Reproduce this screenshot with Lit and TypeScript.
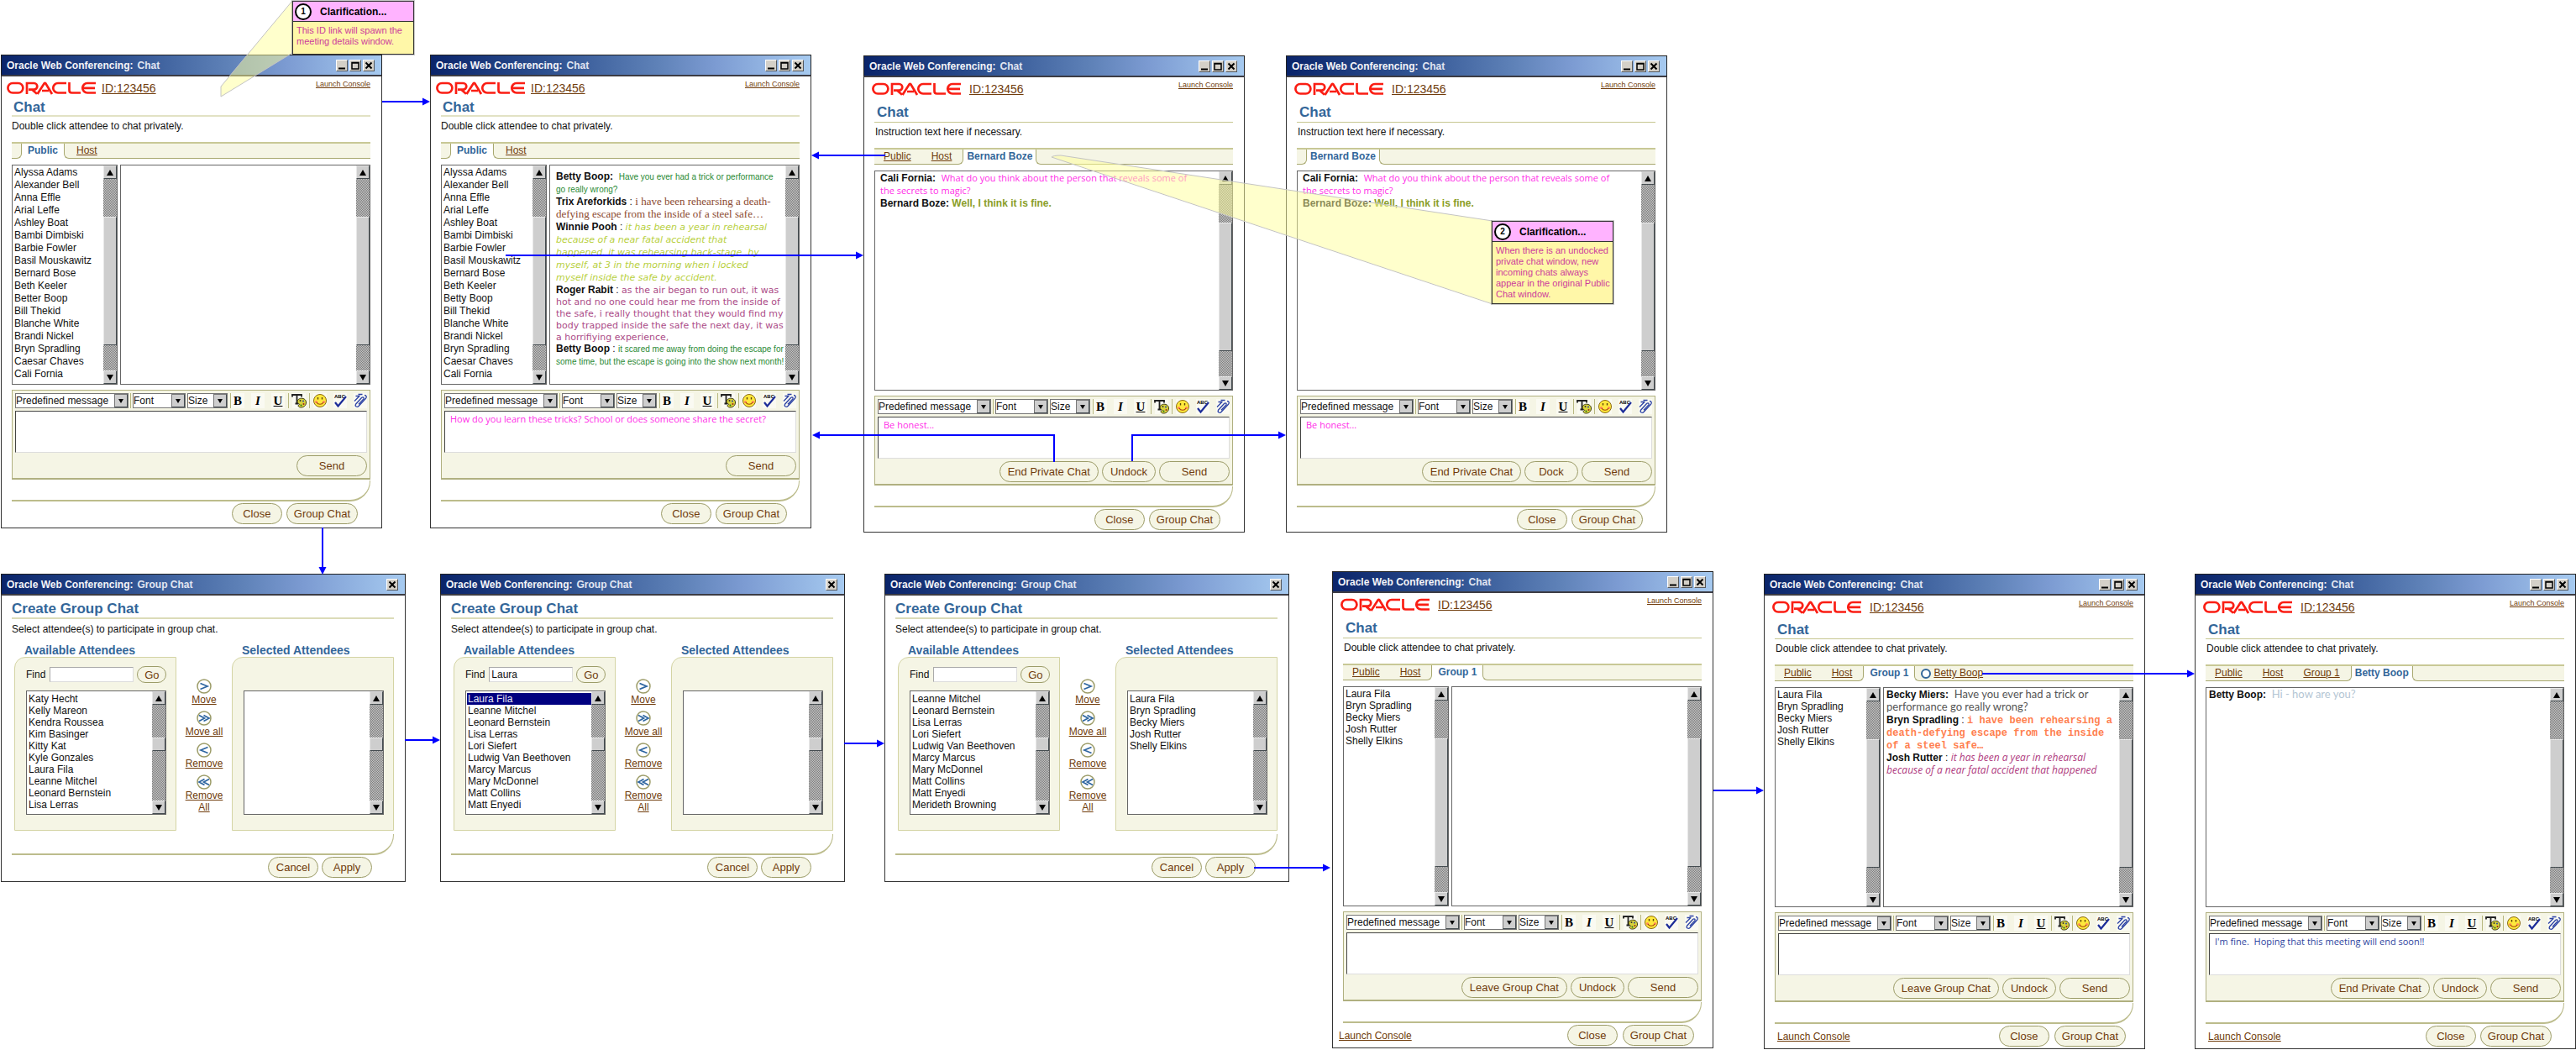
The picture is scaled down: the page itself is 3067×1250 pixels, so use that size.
import { LitElement, html, css, svg, nothing } from "lit";
import { customElement, property } from "lit/decorators.js";
import { classMap } from "lit/directives/class-map.js";
import { styleMap } from "lit/directives/style-map.js";

interface Message {
  who: string;
  sep: string;
  text: string;
  face: string;
}

interface ChatData {
  x: number;
  y: number;
  head: "short" | "mid" | "tall";
  hint: string;
  before: string[];
  active: string;
  after: string[];
  alert?: boolean;
  attendees?: string[];
  inset: "roomy" | "loose" | "tight";
  messages: Message[];
  draft: string;
  draftFace: string;
  actions: string[];
  console?: "edge" | "inner" | "plain";
}

interface GroupData {
  x: number;
  y: number;
  find: string;
  available: string[];
  selected: string[];
  marked?: string;
}

const everyone = (eleventh: string) => [
  "Alyssa Adams", "Alexander Bell", "Anna Effle", "Arial Leffe", "Ashley Boat",
  "Bambi Dimbiski", "Barbie Fowler", "Basil Mouskawitz", "Bernard Bose", "Beth Keeler",
  eleventh, "Bill Thekid", "Blanche White", "Brandi Nickel", "Bryn Spradling",
  "Caesar Chaves", "Cali Fornia",
];
const groupOne = ["Laura Fila", "Bryn Spradling", "Becky Miers", "Josh Rutter", "Shelly Elkins"];
const privately = "Double click attendee to chat privately.";
const instruction = "Instruction text here if necessary.";
const magic: Message[] = [
  { who: "Cali Fornia:", sep: "  ", text: "What do you think about the person that reveals some of\nthe secrets to magic?", face: "trebuchet pink" },
  { who: "Bernard Boze:", sep: " ", text: "Well, I think it is fine.", face: "strong olive" },
];

const chats: ChatData[] = [
  {
    x: 1, y: 65, head: "short", hint: privately, before: [], active: "Public", after: ["Host"],
    attendees: everyone("Better Boop"), inset: "roomy", messages: [], draft: "", draftFace: "", actions: [],
  },
  {
    x: 512, y: 65, head: "short", hint: privately, before: [], active: "Public", after: ["Host"],
    attendees: everyone("Betty Boop"), inset: "roomy",
    messages: [
      { who: "Betty Boop:", sep: "  ", text: "Have you ever had a trick or performance\ngo really wrong?", face: "narrow green" },
      { who: "Trix Areforkids", sep: " : ", text: "i have been rehearsing a death-\ndefying escape from the inside of a steel safe…", face: "palatino brown" },
      { who: "Winnie Pooh", sep: " : ", text: "it has been a year in rehearsal\nbecause of a near fatal accident that\nhappened. it was rehearsing back-stage .by\nmyself, at 3 in the morning when i locked\nmyself inside the safe by accident.", face: "gothic lime" },
      { who: "Roger Rabit", sep: " : ", text: "as the air began to run out, it was\nhot and no one could hear me from the inside of\nthe safe, i really thought that they would find my\nbody trapped inside the safe the next day, it was\na horrifiying experience,", face: "verdana plum" },
      { who: "Betty Boop", sep: " : ", text: "it scared me away from doing the escape for\nsome time, but the escape is going into the show next month!", face: "narrow green" },
    ],
    draft: "How do you learn these tricks? School or does someone share the secret?", draftFace: "trebuchet pink", actions: [],
  },
  {
    x: 1028, y: 66, head: "tall", hint: instruction, before: ["Public", "Host"], active: "Bernard Boze", after: [],
    inset: "loose", messages: magic, draft: "Be honest...", draftFace: "trebuchet pink",
    actions: ["End Private Chat", "Undock"],
  },
  {
    x: 1531, y: 66, head: "tall", hint: instruction, before: [], active: "Bernard Boze", after: [],
    inset: "loose", messages: magic, draft: "Be honest...", draftFace: "trebuchet pink",
    actions: ["End Private Chat", "Dock"],
  },
  {
    x: 1586, y: 680, head: "tall", hint: privately, before: ["Public", "Host"], active: "Group 1", after: [],
    attendees: groupOne, inset: "tight", messages: [], draft: "", draftFace: "",
    actions: ["Leave Group Chat", "Undock"], console: "edge",
  },
  {
    x: 2100, y: 683, head: "mid", hint: privately, before: ["Public", "Host"], active: "Group 1", after: ["Betty Boop"],
    alert: true, attendees: groupOne, inset: "tight",
    messages: [
      { who: "Becky Miers:", sep: "  ", text: "Have you ever had a trick or\nperformance go really wrong?", face: "comic gray" },
      { who: "Bryn Spradling", sep: " : ", text: "i have been rehearsing a\ndeath-defying escape from the inside\nof a steel safe…", face: "courier orange" },
      { who: "Josh Rutter", sep: " : ", text: "it has been a year in rehearsal\nbecause of a near fatal accident that happened", face: "slanted magenta" },
    ],
    draft: "", draftFace: "", actions: ["Leave Group Chat", "Undock"], console: "inner",
  },
  {
    x: 2613, y: 683, head: "mid", hint: privately, before: ["Public", "Host", "Group 1"], active: "Betty Boop", after: [],
    inset: "tight", messages: [{ who: "Betty Boop:", sep: "  ", text: "Hi - how are you?", face: "comic pale" }],
    draft: "I'm fine.  Hoping that this meeting will end soon!!", draftFace: "trebuchet navy",
    actions: ["End Private Chat", "Undock"], console: "plain",
  },
];

const groups: GroupData[] = [
  {
    x: 1, y: 683, find: "", selected: [],
    available: ["Katy Hecht", "Kelly Mareon", "Kendra Roussea", "Kim Basinger", "Kitty Kat", "Kyle Gonzales", "Laura Fila", "Leanne Mitchel", "Leonard Bernstein", "Lisa Lerras"],
  },
  {
    x: 524, y: 683, find: "Laura", selected: [], marked: "Laura Fila",
    available: ["Laura Fila", "Leanne Mitchel", "Leonard Bernstein", "Lisa Lerras", "Lori Siefert", "Ludwig Van Beethoven", "Marcy Marcus", "Mary McDonnel", "Matt Collins", "Matt Enyedi"],
  },
  {
    x: 1053, y: 683, find: "", selected: groupOne,
    available: ["Leanne Mitchel", "Leonard Bernstein", "Lisa Lerras", "Lori Siefert", "Ludwig Van Beethoven", "Marcy Marcus", "Mary McDonnel", "Matt Collins", "Matt Enyedi", "Merideth Browning"],
  },
];

const base = css`
  * { box-sizing: border-box; }
  :host {
    display: block;
    font: 12px/16px "Liberation Sans", Arial, sans-serif;
    color: #111;
  }
  button, input, select, textarea { font: inherit; color: inherit; margin: 0; padding: 0; border-radius: 0; }
  a { color: #703c0c; text-decoration: underline; }
  p, h1, h2 { margin: 0; }
  .window { display: flex; flex-direction: column; background: #fff; border: 1px solid #333; border-top: 0; }
  .bar {
    display: flex; align-items: center; height: 26px; padding: 0 8px 0 6px; margin: 0 -1px; gap: 5px;
    border: 1px solid #222; border-bottom: 2px solid #3c3c44;
    background: linear-gradient(90deg, #0a246a, #2c4f8f 30%, #5f82b8 60%, #7c9bd2 75%, #a6caf0);
    color: #f4f4f8; font-weight: bold;
  }
  .bar .name { flex: 1; color: #e2e6f2; }
  .controls { display: flex; gap: 2px; }
  .controls button {
    width: 14px; height: 14px; display: block; background: #d4d0c8;
    border: 1px solid; border-color: #fff #55585c #55585c #fff;
  }
  .controls svg { display: block; width: 12px; height: 12px; }
  .body { display: flex; flex-direction: column; padding: 0 13px 0 12px; }
  h1 { font-size: 17px; line-height: 18px; color: #336699; }
  .hint { padding: 3px 0 11px; white-space: nowrap; }
  .pill {
    height: 25px; min-width: 60px; padding: 0 8px; border: 1px solid #9c9c68; border-radius: 13px;
    background: #f5f5e5; color: #703c0c; font-size: 13px; line-height: 22px; white-space: nowrap;
  }
  .curve {
    height: 25px; border: solid #bcbc8c; border-width: 0 1px 2px 0; border-bottom-right-radius: 24px;
  }
  .footer { display: flex; justify-content: flex-end; gap: 5px; margin-top: 2px; }
  .listbox { display: flex; min-width: 0; border: 1px solid #666; background: #fff; }
  .listbox select {
    appearance: none; flex: 1; min-width: 0; border: 0; outline: 0; background: #fff;
    overflow: hidden; scrollbar-width: none;
  }
  .trebuchet { font-family: "Open Sans", "Trebuchet MS", sans-serif; font-size: 11px; }
  .pink { color: #ff2ee8; }
  .navy { color: #2f45a0; }
`;

const shut = svg`<path d="M2.5 2.5l7 7M9.5 2.5l-7 7" stroke="#000" stroke-width="2" />`;

const controls = (full: boolean) => html`
  <div class="controls">
    ${full
      ? html`
          <button type="button" aria-label="Minimize"><svg viewBox="0 0 12 12"><path d="M2 9.500h8" stroke="#000" stroke-width="2" /></svg></button>
          <button type="button" aria-label="Maximize"><svg viewBox="0 0 12 12"><path d="M2 2.500h8v7.500h-8z M2 3h8" fill="none" stroke="#000" stroke-width="1.500" /></svg></button>`
      : nothing}
    <button type="button" aria-label="Close window"><svg viewBox="0 0 12 12">${shut}</svg></button>
  </div>
`;

@customElement("scroll-rail")
export class ScrollRail extends LitElement {
  @property({ type: Boolean }) small = false;

  static styles = css`
    * { box-sizing: border-box; }
    :host { display: flex; flex-direction: column; width: 16px; flex: none; }
    button {
      height: 16px; flex: none; margin: 0; padding: 0; display: grid; place-items: center;
      background: #cecece; border: 1px solid; border-color: #e8e8e8 #444c50 #444c50 #e8e8e8;
    }
    svg { width: 8px; height: 7px; display: block; }
    .track {
      flex: 1; display: flex; flex-direction: column;
      background: repeating-conic-gradient(#7c7c7c 0 25%, #c8c8c8 0 50%) 0 0 / 2px 2px;
    }
    .thumb { background: #cecece; border: 1px solid; border-color: #e8e8e8 #444c50 #444c50 #e8e8e8; }
    .lead { flex: 45; }
    .thumb { flex: 153; }
    .tail { flex: 30; }
    .small .lead { flex: 40; }
    .small .thumb { flex: 14; }
    .small .tail { flex: 60; }
  `;

  render() {
    return html`
      <button type="button" aria-label="Scroll up"><svg viewBox="0 0 8 7"><path d="M4 0l4 7H0z" /></svg></button>
      <div class=${classMap({ track: true, small: this.small })}>
        <div class="lead"></div>
        <div class="thumb"></div>
        <div class="tail"></div>
      </div>
      <button type="button" aria-label="Scroll down"><svg viewBox="0 0 8 7"><path d="M4 7l4-7H0z" /></svg></button>
    `;
  }
}

@customElement("message-composer")
export class MessageComposer extends LitElement {
  @property() draft = "";
  @property() face = "";
  @property({ attribute: false }) actions: string[] = [];

  static styles = [
    base,
    css`
      .composer {
        display: flex; flex-direction: column; gap: 3px; padding: 3px 3px 2px 3px;
        border: 1px solid #b0b080; border-bottom-width: 2px; background: #f5f5e5;
      }
      .tools { display: flex; align-items: center; gap: 2px; height: 18px; }
      .drop { display: flex; height: 18px; border: 1px solid #777; background: #fff; }
      .drop select { appearance: none; flex: 1; min-width: 0; border: 0; background: #fff; line-height: 15px; }
      .drop .arrow { width: 16px; display: grid; place-items: center; background: #cecece; border: 1px solid; border-color: #777 #444c50 #444c50 #777; }
      .drop svg { width: 6px; height: 5px; display: block; }
      .predefined { width: 135px; }
      .font { width: 63px; }
      .size { width: 48px; }
      .rule { width: 1px; height: 18px; background: #b8b880; }
      .icons { flex: 1; display: flex; justify-content: space-between; align-items: center; margin-left: 1px; }
      .set { display: flex; gap: 8px; align-items: center; }
      .format { border-left: 1px solid #b8b880; }
      .icon {
        width: 16px; height: 18px; display: grid; place-items: center; border: 0; background: #fafaf2;
        font: bold 15px/18px "Liberation Serif", "Times New Roman", serif; color: #000;
      }
      .icon svg { width: 16px; height: 18px; display: block; overflow: visible; }
      .slant { font-style: italic; }
      .under { text-decoration: underline; }
      textarea {
        display: block; width: 100%; height: 50px; resize: none; padding: 1px 6px; background: #fff;
        border: 1px solid; border-color: #444 #ddd #ddd #444; line-height: 15px; overflow: hidden; outline: 0;
      }
      .actions { display: flex; justify-content: flex-end; gap: 4px; }
      .actions .pill { min-width: 64px; padding: 0 9px; }
      .actions .send { width: 84px; }
    `,
  ];

  drop(kind: string, label: string) {
    return html`
      <div class="drop ${kind}">
        <select aria-label=${label}><option>${label}</option></select>
        <span class="arrow"><svg viewBox="0 0 6 5"><path d="M0 0h6L3 5z" /></svg></span>
      </div>
    `;
  }

  render() {
    return html`
      <div class="composer">
        <div class="tools">
          ${this.drop("predefined", "Predefined message")}
          <span class="rule"></span>
          ${this.drop("font", "Font")}
          ${this.drop("size", "Size")}
          <div class="icons">
            <div class="set format">
              <button type="button" class="icon">B</button>
              <button type="button" class="icon slant">I</button>
              <button type="button" class="icon under">U</button>
            </div>
            <span class="rule"></span>
            <button type="button" class="icon" aria-label="Text color">
              <svg viewBox="0 0 16 18">
                <path d="M0 4.500V2h11v2.500M5.500 2v10.500M3.500 12.500h4" fill="none" stroke="#222" stroke-width="1.800" />
                <path d="M6 10c0-3 4-4.500 7-3.500 3.500 1 4.500 5 2.500 8-1.500 2.500-6 3.500-8 1.500-1-1 0-2 1-2.500 1-.6-2.500-1-2.500-3.500z" fill="#d8d23a" stroke="#3c3a10" />
                <circle cx="9.500" cy="9" r="1" fill="#333" />
                <circle cx="13" cy="9.500" r="1" fill="#2a4aa0" />
                <circle cx="13.500" cy="13" r="1" fill="#a02020" />
                <circle cx="10.500" cy="14.500" r="1" fill="#207020" />
              </svg>
            </button>
            <span class="rule"></span>
            <div class="set">
              <button type="button" class="icon" aria-label="Smiley">
                <svg viewBox="0 0 16 18">
                  <circle cx="8" cy="9" r="7.500" fill="#ffe93c" stroke="#8a6a10" />
                  <circle cx="3.500" cy="10.500" r="1.600" fill="#ff8a5a" />
                  <circle cx="12.500" cy="10.500" r="1.600" fill="#ff8a5a" />
                  <path d="M5.500 5v2.500M10.500 5v2.500" stroke="#5a4208" stroke-width="1.400" />
                  <path d="M4 11c1.500 3 6.500 3 8 0" fill="none" stroke="#a8400c" stroke-width="1.200" />
                </svg>
              </button>
              <button type="button" class="icon" aria-label="Check spelling">
                <svg viewBox="0 0 16 18">
                  <text x="1" y="6" font-family="Liberation Sans, Arial, sans-serif" font-size="6" font-weight="bold">ABC</text>
                  <path d="M2 11l3.500 4.500L15 4" fill="none" stroke="#1c2c98" stroke-width="2.200" />
                </svg>
              </button>
              <button type="button" class="icon" aria-label="Attach file">
                <svg viewBox="0 0 16 18">
                  <g fill="none" stroke="#2c42a4" stroke-width="1.300">
                    <path d="M1 9.500L6.500 4M2.500 3.500h5M5.500 1.500h5" />
                    <path d="M13 2.500c2.200 0 3 2 1.500 3.800L6 15.500c-1.600 1.700-4.800.5-3.500-2.300L9.500 5.500c1.500-1.500 3.500 0 2.200 1.600L6 13.200" />
                  </g>
                </svg>
              </button>
            </div>
          </div>
        </div>
        <textarea class=${this.face} aria-label="Message" spellcheck="false" .value=${this.draft}></textarea>
        <div class="actions">
          ${this.actions.map((a) => html`<button type="button" class="pill">${a}</button>`)}
          <button type="button" class="pill send">Send</button>
        </div>
      </div>
    `;
  }
}

@customElement("chat-window")
export class ChatWindow extends LitElement {
  @property({ attribute: false }) data!: ChatData;

  static styles = [
    base,
    css`
      .window { width: 454px; padding-bottom: 4px; }
      .head { display: flex; flex-direction: column; justify-content: space-between; padding-left: 2px; }
      .short .head { height: 46px; border: 0; }
      .mid .head { height: 51px; padding-bottom: 1px; }
      .tall .head { height: 53px; padding-bottom: 2px; }
      .mid, .tall { padding-bottom: 2px; }
      .mid .head, .tall .head { padding-left: 3px; }
      .mid .hint, .tall .hint { padding-left: 1px; }
      .brand { display: flex; align-items: flex-start; gap: 6px; padding-top: 4px; margin-left: -8px; height: 22px; }
      .mid .brand, .tall .brand { margin-left: -6px; gap: 9px; }
      .logo { width: 107px; height: 16px; margin-top: 2px; display: block; }
      .meeting { font-size: 14px; line-height: 18px; margin-top: 1px; }
      .launch { margin-left: auto; font-size: 9px; line-height: 10px; }
      .divide { height: 2px; background: #e2e2c4; }
      .mid .divide, .tall .divide { height: 1px; background: #c6c690; }
      .tabs { display: flex; height: 20px; line-height: 17px; margin-bottom: 7px; border-top: 2px solid #c8c896; white-space: nowrap; }
      .side { background: #f5f5e5; border: 0 solid #a8a870; border-bottom-width: 1px; display: flex; }
      .before { border-right-width: 1px; border-bottom-right-radius: 6px; min-width: 12px; gap: 24px; }
      .before.filled { padding: 0 13px 0 11px; }
      .after { flex: 1; border-left-width: 1px; border-bottom-left-radius: 6px; padding-left: 14px; }
      .after.alerted { padding-left: 7px; gap: 3px; align-items: center; }
      .ring { width: 12px; height: 12px; border: 2px solid #336699; border-radius: 50%; background: #fff; }
      .active { padding: 0 7px; color: #336699; font-weight: bold; }
      .active.person { padding: 0 4px; }
      .panes { display: flex; gap: 3px; height: 262px; margin-bottom: 6px; }
      .people { width: 126px; flex: none; }
      .people select { padding: 1px 0 0 1px; }
      option { height: 15px; min-height: 15px; padding: 0 1px; line-height: 15px; }
      .mid option, .tall option { height: 14px; min-height: 14px; line-height: 14px; }
      .talk { flex: 1; display: flex; min-width: 0; border: 1px solid #666; }
      .log { flex: 1; min-width: 0; overflow: hidden; line-height: 15px; }
      .roomy { padding: 6px 0 0 7px; }
      .loose { padding: 1px 0 0 6px; }
      .tight { padding: 1px 0 0 3px; }
      .log p { white-space: pre; }
      .log p.dense { line-height: 14px; }
      .log span { line-height: 0; }
      .curve { margin-top: 1px; }
      .footer { padding-right: 15px; align-items: center; }
      .footer.inner, .footer.edge { gap: 6px; padding-right: 9px; }
      .footer.edge { margin-left: -8px; }
      .footer a { margin-right: auto; padding-left: 3px; }
      .narrow { font-size: 10px; }
      .palatino { font-family: "Liberation Serif", "Palatino Linotype", serif; font-size: 13px; }
      .gothic { font-family: "DejaVu Sans", "Century Gothic", sans-serif; font-size: 11px; font-style: italic; }
      .verdana { font-family: "DejaVu Sans", Verdana, sans-serif; font-size: 11px; }
      .comic { font-family: Lato, "Comic Sans MS", sans-serif; font-size: 13px; }
      .courier { font-family: "Liberation Mono", "Courier New", monospace; font-size: 12px; font-weight: bold; }
      .slanted { font-family: "Open Sans", "Trebuchet MS", sans-serif; font-size: 12px; font-style: italic; }
      .strong { font-weight: bold; }
      .olive { color: #8a9e28; }
      .green { color: #2a8a34; }
      .brown { color: #8c4a30; }
      .lime { color: #b8d040; }
      .plum { color: #ac4c88; }
      .gray { color: #555; }
      .pale { color: #b4c6d4; }
      .orange { color: #ff7f50; }
      .magenta { color: #b03c80; }
    `,
  ];

  render() {
    const d = this.data;
    return html`
      <section class="window ${d.head}">
        <div class="bar"><span>Oracle Web Conferencing:</span><span class="name">Chat</span>${controls(true)}</div>
        <div class="body">
          <div class="head">
            <div class="brand">
              <svg class="logo" viewBox="0 0 107 16" role="img" aria-label="Oracle">
                <g fill="none" stroke="#fa1e14" stroke-width="2.700">
                  <rect x="1.400" y="2" width="18" height="11.500" rx="5.700" />
                  <path d="M24 15V2h8.500a3.800 3.800 0 0 1 0 7.600H26M30 9.600l6 5.200" />
                  <path d="M36.500 15l8-12.500q1-1 2 0L54 15M42 11h8" />
                  <path d="M71 2H61a5.700 5.700 0 0 0 0 11.500h10" />
                  <path d="M74.500 1v9.500q0 3 3 3H88" />
                  <path d="M106 2H96a5.700 5.700 0 0 0 0 11.500h10M91 7.800h14" />
                </g>
              </svg>
              <a class="meeting" href="#meeting">ID:123456</a>
              <a class="launch" href="#console">Launch Console</a>
            </div>
            <h1>Chat</h1>
          </div>
          <div class="divide"></div>
          <p class="hint">${d.hint}</p>
          <nav class="tabs">
            <div class=${classMap({ side: true, before: true, filled: d.before.length > 0 })}>
              ${d.before.map((t) => html`<a href="#tab">${t}</a>`)}
            </div>
            <span class=${classMap({ active: true, person: d.active.startsWith("Be") })}>${d.active}</span>
            <div class=${classMap({ side: true, after: true, alerted: !!d.alert })}>
              ${d.alert ? html`<span class="ring"></span>` : nothing}
              ${d.after.map((t) => html`<a href="#tab">${t}</a>`)}
            </div>
          </nav>
          <div class="panes">
            ${d.attendees
              ? html`<div class="listbox people">
                  <select size="17" aria-label="Attendees">${d.attendees.map((n) => html`<option>${n}</option>`)}</select>
                  <scroll-rail></scroll-rail>
                </div>`
              : nothing}
            <div class="talk">
              <div class="log ${d.inset}">
                ${d.messages.map((m) => html`<p class=${m.face.startsWith("verdana") ? "dense" : ""}><b>${m.who}</b>${m.sep}<span class=${m.face}>${m.text}</span></p>`)}
              </div>
              <scroll-rail></scroll-rail>
            </div>
          </div>
          <message-composer .draft=${d.draft} .face=${d.draftFace} .actions=${d.actions}></message-composer>
          <div class="curve"></div>
          <div class="footer ${d.console ?? ""}">
            ${d.console ? html`<a href="#console">Launch Console</a>` : nothing}
            <button type="button" class="pill">Close</button>
            <button type="button" class="pill">Group Chat</button>
          </div>
        </div>
      </section>
    `;
  }
}

@customElement("group-window")
export class GroupWindow extends LitElement {
  @property({ attribute: false }) data!: GroupData;

  static styles = [
    base,
    css`
      .window { width: 482px; padding-bottom: 4px; }
      h1 { padding: 7px 0 1px; border-bottom: 2px solid #dcdcb8; height: 28px; }
      .hint { padding: 4px 0 9px; }
      .picker { display: grid; grid-template-columns: 193px 1fr 193px; padding-left: 3px; margin-bottom: 4px; }
      h2 { font-size: 14px; line-height: 16px; color: #336699; padding-left: 12px; }
      .card {
        height: 207px; padding: 10px 11px 18px 13px; display: flex; flex-direction: column; gap: 9px;
        background: #f5f5e5; border: 1px solid #d4d4a4; border-top-left-radius: 13px;
      }
      .find { display: flex; align-items: center; gap: 4px; height: 20px; }
      .find input { width: 100px; height: 18px; margin-left: 1px; padding: 0 2px; background: #fff; border: 1px solid; border-color: #aaa #ddd #ddd #aaa; outline: 0; }
      .go { height: 20px; min-width: 35px; width: 35px; padding: 0; line-height: 17px; }
      .card .listbox { height: 148px; width: 167px; }
      .card select { padding: 2px 0 0 1px; }
      option { height: 14px; min-height: 14px; line-height: 14px; padding: 0 1px; }
      option:checked { background: linear-gradient(#000080, #000080); -webkit-text-fill-color: #e8e8f4; }
      .moves { display: flex; flex-direction: column; align-items: center; gap: 6px; padding-top: 42px; text-align: center; line-height: 14px; }
      .move { display: flex; flex-direction: column; align-items: center; width: 56px; }
      .move svg { width: 18px; height: 18px; display: block; }
      .footer { padding-right: 26px; gap: 4px; }
    `,
  ];

  move(label: string, marks: string) {
    return html`
      <a class="move" href="#move">
        <svg viewBox="0 0 18 18">
          <circle cx="9" cy="9" r="8" fill="#fff" stroke="#9c9c68" stroke-width="1.500" />
          <path d=${marks} fill="none" stroke="#2c64a0" stroke-width="1.700" />
        </svg>
        <span>${label}</span>
      </a>
    `;
  }

  listbox(label: string, names: string[], marked?: string) {
    return html`
      <div class="listbox">
        <select size="10" aria-label=${label}>${names.map((n) => html`<option ?selected=${n === marked}>${n}</option>`)}</select>
        <scroll-rail small></scroll-rail>
      </div>
    `;
  }

  render() {
    const d = this.data;
    return html`
      <section class="window">
        <div class="bar"><span>Oracle Web Conferencing:</span><span class="name">Group Chat</span>${controls(false)}</div>
        <div class="body">
          <h1>Create Group Chat</h1>
          <p class="hint">Select attendee(s) to participate in group chat.</p>
          <div class="picker">
            <div>
              <h2>Available Attendees</h2>
              <div class="card">
                <div class="find">
                  <label for="find">Find</label>
                  <input id="find" type="text" .value=${d.find} />
                  <button type="button" class="pill go">Go</button>
                </div>
                ${this.listbox("Available Attendees", d.available, d.marked)}
              </div>
            </div>
            <div class="moves">
              ${this.move("Move", "M4.500 5.500l8.500 3.500l-8.500 3.500")}
              ${this.move("Move all", "M3 5.500l6.500 3.500L3 12.500M8.500 5.500L15 9l-6.500 3.500")}
              ${this.move("Remove", "M13.500 5.500L5 9l8.500 3.500")}
              ${this.move("Remove All", "M15 5.500L8.500 9l6.500 3.500M9.500 5.500L3 9l6.500 3.500")}
            </div>
            <div>
              <h2>Selected Attendees</h2>
              <div class="card">
                <div class="find"></div>
                ${this.listbox("Selected Attendees", d.selected)}
              </div>
            </div>
          </div>
          <div class="curve"></div>
          <div class="footer">
            <button type="button" class="pill">Cancel</button>
            <button type="button" class="pill">Apply</button>
          </div>
        </div>
      </section>
    `;
  }
}

@customElement("clarification-note")
export class ClarificationNote extends LitElement {
  @property() number = "";
  @property() text = "";

  static styles = [
    base,
    css`
      .note { width: 145px; min-height: 64px; border: 1px solid #333; background: #fff7a8; box-shadow: 0 0 0 1px #33333344; }
      .title { display: flex; align-items: center; gap: 10px; height: 24px; padding-left: 2px; background: #ffb3ff; border-bottom: 1px solid #333; font-weight: bold; color: #000; }
      .badge { width: 20px; height: 20px; border: 2px solid #000; border-radius: 50%; background: #fff; font-size: 10px; line-height: 16px; text-align: center; }
      p { padding: 4px; font-size: 11px; line-height: 13px; color: #cc3c9c; white-space: pre; }
    `,
  ];

  render() {
    return html`
      <aside class="note">
        <div class="title"><span class="badge">${this.number}</span><span>Clarification...</span></div>
        <p>${this.text}</p>
      </aside>
    `;
  }
}

const flows = [
  "M455 121H504", "M384 628V676", "M1054 185H974", "M602 304H1020", "M1255 550V518H975",
  "M1348 549V518H1523", "M482 881H516", "M1005 885H1045", "M1493 1033H1576",
  "M2040 941H2092", "M2360 802H2605",
];

@customElement("app-root")
export class AppRoot extends LitElement {
  static styles = css`
    :host { display: block; }
    .canvas { position: relative; min-height: 100vh; overflow: hidden; background: #fff; }
    .item { position: absolute; }
    .links { position: absolute; inset: 0; width: 100%; height: 100%; pointer-events: none; }
  `;

  place(x: number, y: number) {
    return styleMap({ left: `${x}px`, top: `${y}px` });
  }

  render() {
    return html`
      <main class="canvas">
        ${chats.map((c) => html`<chat-window class="item" style=${this.place(c.x, c.y)} .data=${c}></chat-window>`)}
        ${groups.map((g) => html`<group-window class="item" style=${this.place(g.x, g.y)} .data=${g}></group-window>`)}
        <svg class="links">
          <defs>
            <marker id="tip" markerUnits="userSpaceOnUse" markerWidth="10" markerHeight="10" refX="1" refY="5" orient="auto">
              <path d="M0 .5L9 5L0 9.500z" fill="#00f" />
            </marker>
          </defs>
          <g fill="#ffff99" fill-opacity=".5" stroke="#c4c4c4">
            <path d="M348 1L263 103V115L348 63z" />
            <path d="M1252 187Q1254 185 1263 185L1777 263V362z" />
          </g>
          <g fill="none" stroke="#00f" stroke-width="2">
            ${flows.map((f) => svg`<path d=${f} marker-end="url(#tip)" />`)}
          </g>
        </svg>
        <clarification-note class="item" style=${this.place(348, 1)} number="1" .text=${"This ID link will spawn the\nmeeting details window."}></clarification-note>
        <clarification-note class="item" style=${this.place(1776, 263)} number="2"
          .text=${"When there is an undocked\nprivate chat window, new\nincoming chats always\nappear in the original Public\nChat window."}></clarification-note>
      </main>
    `;
  }
}
